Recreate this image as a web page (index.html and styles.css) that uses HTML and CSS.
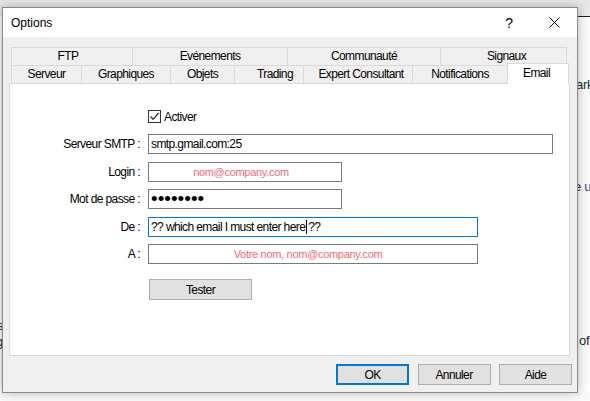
FILE: index.html
```html
<!DOCTYPE html>
<html lang="fr">
<head>
<meta charset="utf-8">
<title>Options</title>
<link rel="stylesheet" href="styles.css">
</head>
<body>
<div class="desk">
  <div class="desk-strip"></div>
  <div class="desk-line"></div>
  <span class="frag f1">ark</span>
  <span class="frag f2">e <span class="blue">u</span></span>
  <span class="frag f3">of</span>
  <span class="frag f4">s</span>
  <span class="frag f5">g</span>

  <div class="dialog">
    <div class="titlebar">
      <span class="title">Options</span>
      <span class="help">?</span>
      <svg class="close" width="11" height="11" viewBox="0 0 11 11"><path d="M0.5 0.5 L10.5 10.5 M10.5 0.5 L0.5 10.5" stroke="#000" stroke-width="1" fill="none"/></svg>
    </div>
    <div class="client">
      <div class="tabs">
        <div class="tabrow">
          <div class="tab t-ftp">FTP</div>
          <div class="tab t-evt">Evénements</div>
          <div class="tab t-com">Communauté</div>
          <div class="tab t-sig last">Signaux</div>
        </div>
        <div class="tabrow">
          <div class="tab t-srv">Serveur</div>
          <div class="tab t-gra">Graphiques</div>
          <div class="tab t-obj">Objets</div>
          <div class="tab t-tra">Trading</div>
          <div class="tab t-exp">Expert Consultant</div>
          <div class="tab t-not">Notifications</div>
          <div class="tab t-eml sel">Email</div>
        </div>
      </div>
      <div class="panel">
        <div class="row-check">
          <span class="checkbox"><svg width="11" height="11" viewBox="0 0 11 11"><path d="M1.5 5.5 L4.2 8.3 L9.6 2" stroke="#333" stroke-width="1.3" fill="none"/></svg></span>
          <span class="check-label">Activer</span>
        </div>
        <div class="field-row first">
          <span class="label">Serveur SMTP :</span>
          <div class="input w-long">smtp.gmail.com:25</div>
        </div>
        <div class="field-row">
          <span class="label">Login :</span>
          <div class="input w-short hint h-login">nom@company.com</div>
        </div>
        <div class="field-row">
          <span class="label">Mot de passe :</span>
          <div class="input w-short dots">••••••••</div>
        </div>
        <div class="field-row">
          <span class="label">De :</span>
          <div class="input w-mid focus">?? which email I must enter here<span class="caret"></span>??</div>
        </div>
        <div class="field-row">
          <span class="label">A :</span>
          <div class="input w-mid hint h-to">Votre nom, nom@company.com</div>
        </div>
        <div class="test-row">
          <button class="btn tester">Tester</button>
        </div>
      </div>
      <div class="buttons">
        <button class="btn default">OK</button>
        <button class="btn">Annuler</button>
        <button class="btn">Aide</button>
      </div>
    </div>
  </div>
</div>
</body>
</html>
```

FILE: styles.css
```css
html, body {
  margin: 0;
  padding: 0;
}
body {
  width: 590px;
  height: 401px;
  overflow: hidden;
  background: #ffffff;
  font-family: "Liberation Sans", Arial, sans-serif;
  font-size: 12px;
  color: #000;
}
.desk {
  position: relative;
  width: 590px;
  height: 401px;
  background: #fbfbfb;
}
.desk-strip {
  position: absolute;
  left: 0;
  top: 0;
  width: 590px;
  height: 16px;
  background: #e8e8e8;
}
.desk-line {
  position: absolute;
  left: 578px;
  top: 16px;
  width: 12px;
  height: 1px;
  background: #1e1e1e;
}
.frag {
  position: absolute;
  font-size: 13px;
  color: #1b2a3a;
  letter-spacing: -0.3px;
  white-space: nowrap;
}
.frag .blue { color: #1c3fa8; }
.f1 { left: 576px; top: 77px; }
.f2 { left: 574px; top: 179px; }
.f3 { left: 579px; top: 333px; }
.f4 { left: -3px; top: 318px; }
.f5 { left: -4px; top: 334px; }

.dialog {
  position: absolute;
  left: 2px;
  top: 7px;
  width: 576px;
  height: 386px;
  box-sizing: border-box;
  border: 1px solid #8a8a8a;
  background: #f0f0f0;
  box-shadow: 0 0 10px rgba(0, 0, 0, 0.28);
  display: flex;
  flex-direction: column;
}
.titlebar {
  height: 29px;
  flex: none;
  background: #ffffff;
  display: flex;
  align-items: center;
  padding: 0 17px 0 8px;
}
.title {
  font-size: 12px;
  letter-spacing: 0;
  margin-top: 1px;
}
.help {
  margin-left: auto;
  font-size: 14px;
}
.close {
  margin-left: 36px;
  display: block;
}
.client {
  flex: 1;
  display: flex;
  flex-direction: column;
}
.tabs {
  margin-top: 10px;
  margin-left: 8px;
}
.tabrow {
  display: flex;
  height: 18px;
  align-items: flex-start;
}
.tab {
  box-sizing: border-box;
  height: 18px;
  border-top: 1px solid #d9d9d9;
  border-left: 1px solid #d9d9d9;
  background: #f0f0f0;
  text-align: center;
  line-height: 17px;
  letter-spacing: -0.6px;
  white-space: nowrap;
}
.tab.last { border-right: 1px solid #d9d9d9; }
.t-ftp { width: 121px; padding-right: 8px; }
.t-evt { width: 155px; }
.t-com { width: 153px; }
.t-sig { width: 127px; padding-left: 6px; }
.t-srv { width: 70px; }
.t-gra { width: 89px; }
.t-obj { width: 64px; }
.t-tra { width: 69px; padding-left: 12px; }
.t-exp { width: 109px; padding-left: 6px; }
.t-not { width: 95px; }
.t-eml { width: 62px; }
.tab.sel {
  height: 21px;
  margin-top: -2px;
  background: #ffffff;
  border-right: 1px solid #d9d9d9;
  line-height: 18px;
  position: relative;
  z-index: 2;
  padding-right: 3px;
}
.panel {
  margin-left: 6px;
  width: 561px;
  height: 273px;
  box-sizing: border-box;
  border: 1px solid #d9d9d9;
  background: #ffffff;
  padding-top: 26px;
}
.row-check {
  display: flex;
  align-items: center;
  height: 13px;
  margin-left: 138px;
}
.checkbox {
  width: 13px;
  height: 13px;
  box-sizing: border-box;
  border: 1px solid #333333;
  background: #fff;
  display: flex;
  align-items: center;
  justify-content: center;
}
.checkbox svg { display: block; }
.check-label {
  margin-left: 3px;
  letter-spacing: -0.6px;
}
.field-row {
  display: flex;
  align-items: center;
  height: 20px;
  margin-top: 7.5px;
}
.field-row.first { margin-top: 11px; }
.label {
  width: 130px;
  margin-right: 8px;
  text-align: right;
  letter-spacing: -0.6px;
  white-space: nowrap;
}
.input {
  box-sizing: border-box;
  height: 20px;
  border: 1px solid #7a7a7a;
  background: #fff;
  padding: 0 2px;
  line-height: 18px;
  letter-spacing: -0.6px;
  white-space: nowrap;
  overflow: hidden;
}
.w-long { width: 405px; }
.w-short { width: 194px; }
.w-mid { width: 330px; }
.focus { border-color: #0078d7; }
.hint {
  color: #f26b76;
  font-size: 11px;
  letter-spacing: -0.3px;
  text-align: center;
}
.h-login { padding-right: 10px; }
.h-to { padding-right: 12px; }
.dots {
  font-size: 19px;
  letter-spacing: 0;
  line-height: 17px;
  padding-left: 2px;
}
.caret {
  display: inline-block;
  width: 1px;
  height: 14px;
  background: #000;
  vertical-align: -3px;
  margin: 0 1px 0 1px;
}
.test-row {
  margin-top: 15px;
  margin-left: 139px;
}
.btn {
  box-sizing: border-box;
  height: 21px;
  width: 73px;
  border: 1px solid #adadad;
  background: #e1e1e1;
  font-family: "Liberation Sans", Arial, sans-serif;
  font-size: 12px;
  letter-spacing: -0.6px;
  color: #000;
  padding: 0;
  margin: 0;
  display: block;
}
.tester { width: 103px; }
.btn.default {
  border: 2px solid #0078d7;
}
.buttons {
  display: flex;
  justify-content: flex-end;
  gap: 8.5px;
  margin-top: 8px;
  padding-right: 5px;
}
```
